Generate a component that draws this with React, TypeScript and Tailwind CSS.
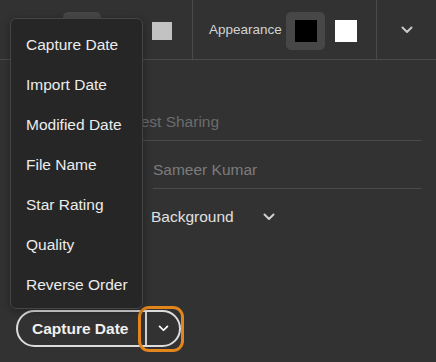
import React from "react";

const Chevron = ({ className = "" }: { className?: string }) => (
  <svg viewBox="0 0 12 8" className={className} fill="none" stroke="currentColor" strokeWidth="2" strokeLinecap="round" strokeLinejoin="round">
    <path d="M1.5 1.5 L6 6 L10.5 1.5" />
  </svg>
);

const items = ["Capture Date", "Import Date", "Modified Date", "File Name", "Star Rating", "Quality", "Reverse Order"];

export default function App() {
  return (
    <div
      className="relative w-[436px] h-[362px] overflow-hidden bg-[#323232] flex flex-col"
      style={{ fontFamily: '"Liberation Sans", Arial, sans-serif' }}
    >
      {/* toolbar */}
      <div className="flex h-[60px] border-b border-[#4a4a4a] shrink-0">
        <div className="w-[192px] flex items-center pl-[63px] pt-[2px]">
          <div className="w-[38px] h-[38px] rounded-[5px] bg-[#474747] flex items-center justify-center">
            <div className="w-[22px] h-[22px] bg-[#1d1d1d]" />
          </div>
          <div className="ml-[51px] w-[20px] h-[18px] bg-[#c2c2c2]" />
        </div>
        <div className="w-[184px] border-l border-[#4a4a4a] flex items-center pl-[16px] pt-[2px]">
          <span className="w-[77px] text-[13.5px] text-[#d2d2d2]">Appearance</span>
          <div className="w-[39px] h-[38px] rounded-[5px] bg-[#474747] flex items-center justify-center">
            <div className="w-[22px] h-[22px] bg-black" />
          </div>
          <div className="ml-[10px] w-[22px] h-[22px] bg-white" />
        </div>
        <div className="flex-1 border-l border-[#4a4a4a] flex items-center justify-center pt-[1px]">
          <Chevron className="w-[12px] h-[8px] text-[#c8c8c8]" />
        </div>
      </div>

      {/* content */}
      <div className="pl-[120px] pr-[14px] pt-[51px]">
        <div className="h-[30px] flex items-start border-b border-[#4a4a4a] text-[15.5px] leading-[22px] text-[#6c6c6c]">
          Guest Sharing
        </div>
        <div className="ml-[33px] h-[48px] pt-[18px] border-b border-[#4a4a4a] text-[15.5px] leading-[22px] text-[#7c7c7c]">
          Sameer Kumar
        </div>
        <div className="ml-[31px] pt-[17px] flex items-center text-[15.5px] leading-[22px] text-[#e0e0e0]">
          <span>Background</span>
          <Chevron className="ml-[29px] w-[12px] h-[8px] text-[#d0d0d0]" />
        </div>
      </div>

      {/* bottom picker button */}
      <div className="mt-auto pl-[16px] pb-[15px]">
        <div className="inline-flex h-[37px] rounded-full border-2 border-[#dcdcdc] items-stretch">
          <div className="w-[127px] flex items-center pl-[14px] text-[15.5px] font-bold text-[#f0f0f0]">
            Capture Date
          </div>
          <div className="relative w-[34px] border-l-2 border-[#cfcfcf] flex items-center justify-center">
            <Chevron className="w-[11px] h-[7px] text-white" />
            <div className="absolute left-[-9px] top-[-6px] w-[46px] h-[46px] rounded-[11px] border-[3px] border-[#e3851b]" />
          </div>
        </div>
      </div>

      {/* dropdown menu */}
      <div className="absolute left-[10px] top-[18px] w-[133px] h-[291px] rounded-[6px] border border-[#454545] bg-[#262626] pt-[6px] shadow-[0_2px_8px_rgba(0,0,0,0.35)]">
        {items.map((it) => (
          <div key={it} className="h-[40px] flex items-center pl-[15px] text-[15.5px] text-[#ececec]">
            {it}
          </div>
        ))}
      </div>
    </div>
  );
}
